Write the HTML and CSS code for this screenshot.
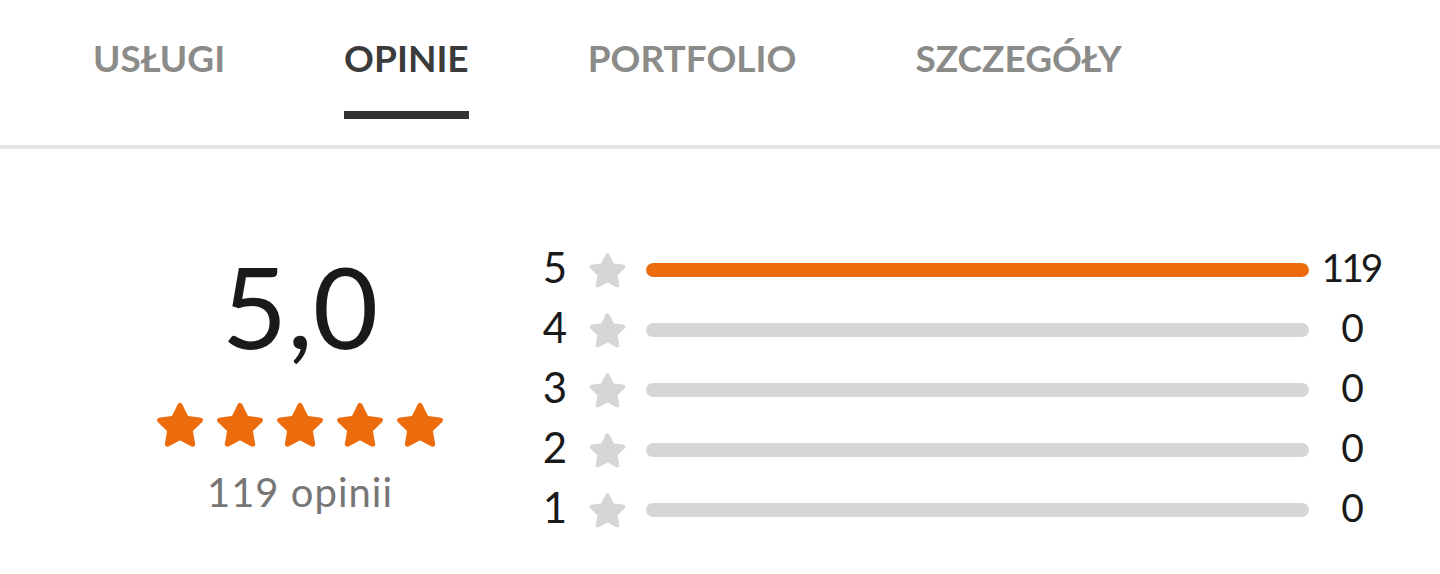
FILE: index.html
```html
<!DOCTYPE html>
<html lang="pl">
<head>
<meta charset="utf-8">
<title>Opinie</title>
<link rel="stylesheet" href="styles.css">
</head>
<body>
<nav class="tabs">
  <a class="tab">USŁUGI</a>
  <a class="tab active">OPINIE</a>
  <a class="tab">PORTFOLIO</a>
  <a class="tab">SZCZEGÓŁY</a>
</nav>
<main class="reviews">
  <section class="summary">
    <div class="score">5,0</div>
    <div class="stars">
      <svg class="star" viewBox="0 0 24 22"><polygon points="12,1.6 15,7.7 21.8,8.7 16.9,13.5 18.1,20.2 12,17 5.9,20.2 7.1,13.5 2.2,8.7 9,7.7"/></svg>
      <svg class="star" viewBox="0 0 24 22"><polygon points="12,1.6 15,7.7 21.8,8.7 16.9,13.5 18.1,20.2 12,17 5.9,20.2 7.1,13.5 2.2,8.7 9,7.7"/></svg>
      <svg class="star" viewBox="0 0 24 22"><polygon points="12,1.6 15,7.7 21.8,8.7 16.9,13.5 18.1,20.2 12,17 5.9,20.2 7.1,13.5 2.2,8.7 9,7.7"/></svg>
      <svg class="star" viewBox="0 0 24 22"><polygon points="12,1.6 15,7.7 21.8,8.7 16.9,13.5 18.1,20.2 12,17 5.9,20.2 7.1,13.5 2.2,8.7 9,7.7"/></svg>
      <svg class="star" viewBox="0 0 24 22"><polygon points="12,1.6 15,7.7 21.8,8.7 16.9,13.5 18.1,20.2 12,17 5.9,20.2 7.1,13.5 2.2,8.7 9,7.7"/></svg>
    </div>
    <div class="count">119 opinii</div>
  </section>
  <section class="bars">
    <div class="row">
      <span class="label">5</span>
      <svg class="mini-star" viewBox="0 0 24 22"><polygon points="12,1.6 15,7.7 21.8,8.7 16.9,13.5 18.1,20.2 12,17 5.9,20.2 7.1,13.5 2.2,8.7 9,7.7"/></svg>
      <div class="track"><div class="fill" style="width:100%"></div></div>
      <span class="num">119</span>
    </div>
    <div class="row">
      <span class="label">4</span>
      <svg class="mini-star" viewBox="0 0 24 22"><polygon points="12,1.6 15,7.7 21.8,8.7 16.9,13.5 18.1,20.2 12,17 5.9,20.2 7.1,13.5 2.2,8.7 9,7.7"/></svg>
      <div class="track"><div class="fill" style="width:0%"></div></div>
      <span class="num">0</span>
    </div>
    <div class="row">
      <span class="label">3</span>
      <svg class="mini-star" viewBox="0 0 24 22"><polygon points="12,1.6 15,7.7 21.8,8.7 16.9,13.5 18.1,20.2 12,17 5.9,20.2 7.1,13.5 2.2,8.7 9,7.7"/></svg>
      <div class="track"><div class="fill" style="width:0%"></div></div>
      <span class="num">0</span>
    </div>
    <div class="row">
      <span class="label">2</span>
      <svg class="mini-star" viewBox="0 0 24 22"><polygon points="12,1.6 15,7.7 21.8,8.7 16.9,13.5 18.1,20.2 12,17 5.9,20.2 7.1,13.5 2.2,8.7 9,7.7"/></svg>
      <div class="track"><div class="fill" style="width:0%"></div></div>
      <span class="num">0</span>
    </div>
    <div class="row">
      <span class="label">1</span>
      <svg class="mini-star" viewBox="0 0 24 22"><polygon points="12,1.6 15,7.7 21.8,8.7 16.9,13.5 18.1,20.2 12,17 5.9,20.2 7.1,13.5 2.2,8.7 9,7.7"/></svg>
      <div class="track"><div class="fill" style="width:0%"></div></div>
      <span class="num">0</span>
    </div>
  </section>
</main>
</body>
</html>
```

FILE: styles.css
```css
* { box-sizing: border-box; }
html, body {
  margin: 0;
  padding: 0;
  background: #fff;
  font-family: Lato, "Open Sans", "Liberation Sans", sans-serif;
  color: #1c1c1c;
}

.tabs {
  display: flex;
  gap: 119px;
  padding-left: 93px;
  height: 149px;
  border-bottom: 4px solid #e6e6e6;
}
.tab {
  display: flex;
  flex-direction: column;
  padding-top: 36px;
  font-size: 37px;
  line-height: 44px;
  font-weight: 700;
  color: #8b8b89;
  cursor: pointer;
}
.tab::after {
  content: "";
  display: block;
  margin-top: 31px;
  height: 8px;
}
.tab.active { color: #3b3b3b; }
.tab.active::after { background: #333333; }

.reviews {
  display: flex;
  padding-top: 91px;
  gap: 90px;
}

.summary {
  width: 300px;
  margin-left: 150px;
  display: flex;
  flex-direction: column;
  align-items: center;
  padding-top: 9px;
}
.score {
  font-size: 113px;
  line-height: 113px;
  font-weight: 400;
  color: #1a1a1a;
}
.stars {
  display: flex;
  gap: 10px;
  margin-top: 40px;
}
.star {
  width: 50px;
  height: 46px;
}
.star polygon {
  fill: #ec6b0c;
  stroke: #ec6b0c;
  stroke-width: 2.4;
  stroke-linejoin: round;
}
.count {
  margin-top: 24px;
  font-size: 40px;
  line-height: 40px;
  letter-spacing: 1px;
  color: #767676;
}

.bars {
  display: flex;
  flex-direction: column;
}
.row {
  display: flex;
  align-items: center;
  height: 60px;
}
.label {
  width: 30px;
  text-align: center;
  font-size: 42px;
  line-height: 42px;
  padding-bottom: 6px;
  color: #1a1a1a;
}
.mini-star {
  width: 39px;
  height: 37px;
  margin-left: 18px;
}
.mini-star polygon {
  fill: #d6d6d6;
  stroke: #d6d6d6;
  stroke-width: 2.4;
  stroke-linejoin: round;
}
.track {
  width: 663px;
  height: 14px;
  margin-left: 19px;
  border-radius: 7px;
  background: #d6d6d6;
  overflow: hidden;
}
.fill {
  height: 100%;
  background: #ec6b0c;
  border-radius: 7px;
}
.num {
  width: 60px;
  margin-left: 12px;
  text-align: center;
  font-size: 39px;
  line-height: 39px;
  letter-spacing: -3px;
  padding-bottom: 5px;
  color: #1a1a1a;
}
```
